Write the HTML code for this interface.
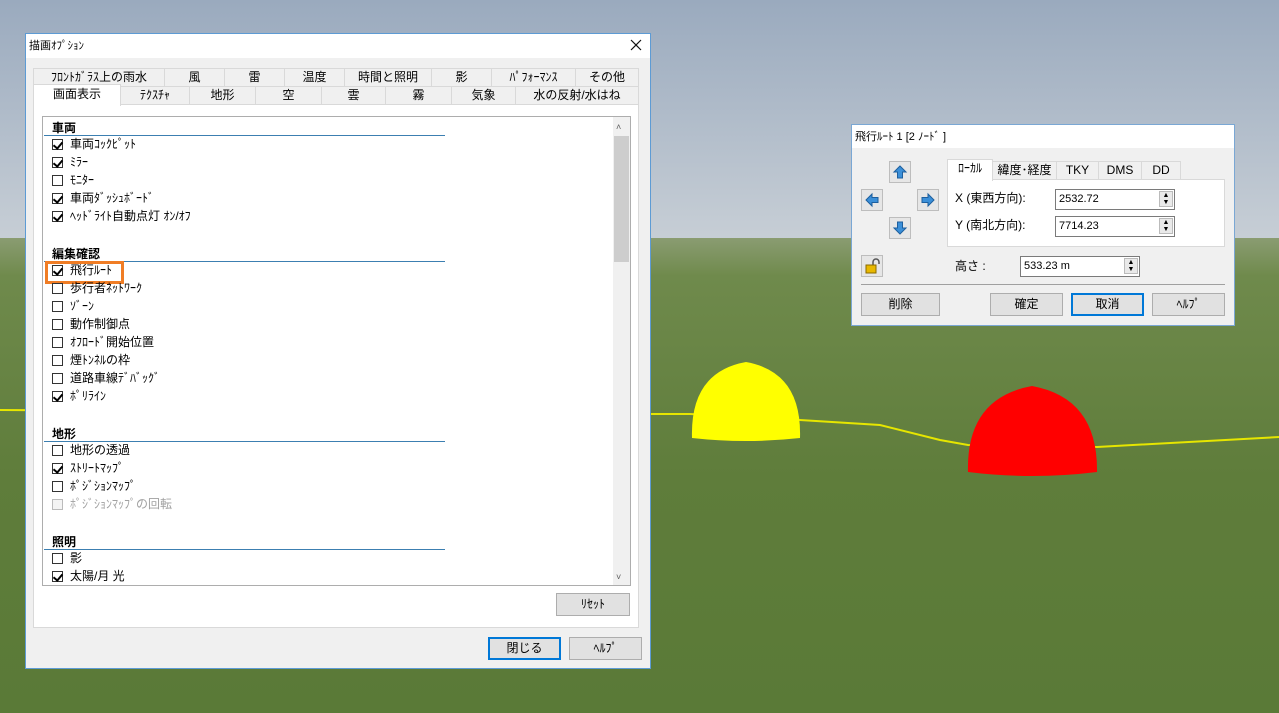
<!DOCTYPE html>
<html><head><meta charset="utf-8"><style>
*{margin:0;padding:0;box-sizing:border-box}
body{width:1279px;height:713px;overflow:hidden;position:relative;font-family:"Liberation Sans","Noto Sans CJK JP",sans-serif;font-size:12px;color:#000}
.a{position:absolute}
.t{position:absolute;white-space:nowrap;line-height:14px}
.tab{position:absolute;border:1px solid #d9d9d9;background:#f0f0f0;text-align:center;line-height:17px;font-size:12px;white-space:nowrap}
.cb{position:absolute;width:11px;height:11px;border:1px solid #333;background:#fff}
.cb.on::after{content:"";position:absolute;left:2px;top:0px;width:4px;height:7px;border:solid #000;border-width:0 2px 2px 0;transform:rotate(40deg)}
.cb.dis{border-color:#bbb;background:#f4f4f4}
.hd{position:absolute;left:52px;font-weight:bold;font-size:12px}
.ln{position:absolute;left:44px;width:401px;height:1px;background:#3c7fb1}
.btn{position:absolute;background:#e1e1e1;border:1px solid #adadad;text-align:center;line-height:20px;font-size:12px}
.inp{position:absolute;background:#fff;border:1px solid #7a7a7a;padding-left:3px;line-height:18px;font-size:11px}
.spin{position:absolute;right:1px;top:1px;width:14px;height:16px;background:#e9e9e9;border:1px solid #bbb;font-size:7px;line-height:7px;text-align:center}
.ab{position:absolute;width:22px;height:22px;background:#e6e6e6;border:1px solid #bdbdbd}
</style></head><body>
<svg class="a" style="left:0;top:0" width="1279" height="713">
<defs>
<linearGradient id="sky" x1="0" y1="0" x2="0" y2="1"><stop offset="0" stop-color="#9aaabe"/><stop offset="1" stop-color="#c8cfd6"/></linearGradient>
<linearGradient id="gr" x1="0" y1="0" x2="0" y2="1"><stop offset="0" stop-color="#8a9c72"/><stop offset="0.08" stop-color="#6f8a4c"/><stop offset="0.5" stop-color="#5f7d3b"/><stop offset="1" stop-color="#5a7a37"/></linearGradient>
</defs>
<rect width="1279" height="245" fill="url(#sky)"/>
<rect y="238" width="1279" height="475" fill="url(#gr)"/>
<polyline points="0,410 651,414 690,414 800,420 880,425 940,440 968,445 1097,447 1279,437" fill="none" stroke="#e6e600" stroke-width="2"/>
<path d="M692,438 Q690,372 746,362 Q802,372 800,438 Q746,444 692,438Z" fill="#ffff00"/>
<path d="M968,472 Q966,398 1032,386 Q1098,398 1097,472 Q1032,480 968,472Z" fill="#ff0000"/>
</svg>

<div class="a" style="left:25px;top:33px;width:626px;height:636px;background:#f0f0f0;border:1px solid #5d9bd4"></div>
<div class="a" style="left:26px;top:34px;width:624px;height:24px;background:#fff"></div>
<div class="t" style="left:29px;top:39px;font-size:11px">描画ｵﾌﾟｼｮﾝ</div>
<svg class="a" style="left:630px;top:39px" width="12" height="12"><path d="M1,1 L11,11 M11,1 L1,11" stroke="#111" stroke-width="1.2"/></svg>

<div class="tab" style="left:33px;top:68px;width:132px;height:19px">ﾌﾛﾝﾄｶﾞﾗｽ上の雨水</div>
<div class="tab" style="left:164px;top:68px;width:61px;height:19px">風</div>
<div class="tab" style="left:224px;top:68px;width:61px;height:19px">雷</div>
<div class="tab" style="left:284px;top:68px;width:61px;height:19px">温度</div>
<div class="tab" style="left:344px;top:68px;width:88px;height:19px">時間と照明</div>
<div class="tab" style="left:431px;top:68px;width:61px;height:19px">影</div>
<div class="tab" style="left:491px;top:68px;width:85px;height:19px">ﾊﾟﾌｫｰﾏﾝｽ</div>
<div class="tab" style="left:575px;top:68px;width:64px;height:19px">その他</div>
<div class="tab" style="left:120px;top:86px;width:70px;height:19px">ﾃｸｽﾁｬ</div>
<div class="tab" style="left:189px;top:86px;width:67px;height:19px">地形</div>
<div class="tab" style="left:255px;top:86px;width:67px;height:19px">空</div>
<div class="tab" style="left:321px;top:86px;width:65px;height:19px">雲</div>
<div class="tab" style="left:385px;top:86px;width:67px;height:19px">霧</div>
<div class="tab" style="left:451px;top:86px;width:65px;height:19px">気象</div>
<div class="tab" style="left:515px;top:86px;width:124px;height:19px">水の反射/水はね</div>
<div class="a" style="left:33px;top:104px;width:606px;height:524px;background:#fff;border:1px solid #d9d9d9"></div>
<div class="tab" style="left:33px;top:84px;width:88px;height:22px;background:#fff;border-bottom:none;line-height:19px">画面表示</div>

<div class="a" style="left:42px;top:116px;width:589px;height:470px;border:1px solid #adadad;background:#fff"></div>
<div class="a" style="left:613px;top:117px;width:17px;height:468px;background:#f0f0f0"></div>
<div class="a" style="left:614px;top:136px;width:15px;height:126px;background:#cdcdcd"></div>
<div class="t" style="left:616px;top:120px;font-size:9px;color:#606060">&#x2c4;</div>
<div class="t" style="left:616px;top:570px;font-size:9px;color:#606060">&#x2c5;</div>

<div class="hd" style="top:119px">車両</div><div class="ln" style="top:135px"></div>
<div class="cb on" style="left:52px;top:139px"></div><div class="t" style="left:70px;top:137px">車両ｺｯｸﾋﾟｯﾄ</div>
<div class="cb on" style="left:52px;top:157px"></div><div class="t" style="left:70px;top:155px">ﾐﾗｰ</div>
<div class="cb" style="left:52px;top:175px"></div><div class="t" style="left:70px;top:173px">ﾓﾆﾀｰ</div>
<div class="cb on" style="left:52px;top:193px"></div><div class="t" style="left:70px;top:191px">車両ﾀﾞｯｼｭﾎﾞｰﾄﾞ</div>
<div class="cb on" style="left:52px;top:211px"></div><div class="t" style="left:70px;top:209px">ﾍｯﾄﾞﾗｲﾄ自動点灯 ｵﾝ/ｵﾌ</div>

<div class="hd" style="top:245px">編集確認</div><div class="ln" style="top:261px"></div>
<div class="cb on" style="left:52px;top:265px"></div><div class="t" style="left:70px;top:263px">飛行ﾙｰﾄ</div>
<div class="a" style="left:45px;top:261px;width:79px;height:23px;border:3px solid #f07d25"></div>
<div class="cb" style="left:52px;top:283px"></div><div class="t" style="left:70px;top:281px">歩行者ﾈｯﾄﾜｰｸ</div>
<div class="cb" style="left:52px;top:301px"></div><div class="t" style="left:70px;top:299px">ｿﾞｰﾝ</div>
<div class="cb" style="left:52px;top:319px"></div><div class="t" style="left:70px;top:317px">動作制御点</div>
<div class="cb" style="left:52px;top:337px"></div><div class="t" style="left:70px;top:335px">ｵﾌﾛｰﾄﾞ開始位置</div>
<div class="cb" style="left:52px;top:355px"></div><div class="t" style="left:70px;top:353px">煙ﾄﾝﾈﾙの枠</div>
<div class="cb" style="left:52px;top:373px"></div><div class="t" style="left:70px;top:371px">道路車線ﾃﾞﾊﾞｯｸﾞ</div>
<div class="cb on" style="left:52px;top:391px"></div><div class="t" style="left:70px;top:389px">ﾎﾟﾘﾗｲﾝ</div>

<div class="hd" style="top:425px">地形</div><div class="ln" style="top:441px"></div>
<div class="cb" style="left:52px;top:445px"></div><div class="t" style="left:70px;top:443px">地形の透過</div>
<div class="cb on" style="left:52px;top:463px"></div><div class="t" style="left:70px;top:461px">ｽﾄﾘｰﾄﾏｯﾌﾟ</div>
<div class="cb" style="left:52px;top:481px"></div><div class="t" style="left:70px;top:479px">ﾎﾟｼﾞｼｮﾝﾏｯﾌﾟ</div>
<div class="cb dis" style="left:52px;top:499px"></div><div class="t" style="left:70px;top:497px;color:#a0a0a0">ﾎﾟｼﾞｼｮﾝﾏｯﾌﾟの回転</div>

<div class="hd" style="top:533px">照明</div><div class="ln" style="top:549px"></div>
<div class="cb" style="left:52px;top:553px"></div><div class="t" style="left:70px;top:551px">影</div>
<div class="cb on" style="left:52px;top:571px"></div><div class="t" style="left:70px;top:569px">太陽/月 光</div>

<div class="btn" style="left:556px;top:593px;width:74px;height:23px">ﾘｾｯﾄ</div>
<div class="btn" style="left:488px;top:637px;width:73px;height:23px;border:2px solid #0078d7;line-height:19px">閉じる</div>
<div class="btn" style="left:569px;top:637px;width:73px;height:23px">ﾍﾙﾌﾟ</div>

<div class="a" style="left:851px;top:124px;width:384px;height:202px;background:#f0f0f0;border:1px solid #7aa7d4"></div>
<div class="a" style="left:852px;top:125px;width:382px;height:23px;background:#fff"></div>
<div class="t" style="left:855px;top:130px;font-size:11px">飛行ﾙｰﾄ 1 [2 ﾉｰﾄﾞ ]</div>
<div class="tab" style="left:992px;top:161px;width:65px;height:19px">緯度･経度</div>
<div class="tab" style="left:1056px;top:161px;width:43px;height:19px">TKY</div>
<div class="tab" style="left:1098px;top:161px;width:44px;height:19px">DMS</div>
<div class="tab" style="left:1141px;top:161px;width:40px;height:19px">DD</div>
<div class="a" style="left:947px;top:179px;width:278px;height:68px;background:#fff;border:1px solid #d9d9d9"></div>
<div class="tab" style="left:947px;top:159px;width:46px;height:22px;background:#fff;border-bottom:none">ﾛｰｶﾙ</div>
<div class="t" style="left:955px;top:191px">X (東西方向):</div>
<div class="inp" style="left:1055px;top:189px;width:120px;height:21px">2532.72<div class="spin">▲<br>▼</div></div>
<div class="t" style="left:955px;top:218px">Y (南北方向):</div>
<div class="inp" style="left:1055px;top:216px;width:120px;height:21px">7714.23<div class="spin">▲<br>▼</div></div>
<div class="ab" style="left:889px;top:161px"><svg width="20" height="20"><path d="M10,4 L16,10 H12.5 V16 H7.5 V10 H4Z" fill="#3b8fd8" stroke="#1d5f9e"/></svg></div>
<div class="ab" style="left:861px;top:189px"><svg width="20" height="20"><path d="M4,10 L10,4 V7.5 H16 V12.5 H10 V16Z" fill="#3b8fd8" stroke="#1d5f9e"/></svg></div>
<div class="ab" style="left:917px;top:189px"><svg width="20" height="20"><path d="M16,10 L10,4 V7.5 H4 V12.5 H10 V16Z" fill="#3b8fd8" stroke="#1d5f9e"/></svg></div>
<div class="ab" style="left:889px;top:217px"><svg width="20" height="20"><path d="M10,16 L16,10 H12.5 V4 H7.5 V10 H4Z" fill="#3b8fd8" stroke="#1d5f9e"/></svg></div>
<div class="ab" style="left:861px;top:255px"><svg width="20" height="20"><path d="M11,9 V6 a3,3 0 0 1 6,0 V8" fill="none" stroke="#555" stroke-width="1.5"/><rect x="4" y="9" width="10" height="8" fill="#e8b800" stroke="#8a6a00"/></svg></div>
<div class="t" style="left:955px;top:259px">高さ :</div>
<div class="inp" style="left:1020px;top:256px;width:120px;height:21px">533.23 m<div class="spin">▲<br>▼</div></div>
<div class="a" style="left:861px;top:284px;width:364px;height:1px;background:#a0a0a0"></div>
<div class="btn" style="left:861px;top:293px;width:79px;height:23px">削除</div>
<div class="btn" style="left:990px;top:293px;width:73px;height:23px">確定</div>
<div class="btn" style="left:1071px;top:293px;width:73px;height:23px;border:2px solid #0078d7;line-height:19px">取消</div>
<div class="btn" style="left:1152px;top:293px;width:73px;height:23px">ﾍﾙﾌﾟ</div>
</body></html>
